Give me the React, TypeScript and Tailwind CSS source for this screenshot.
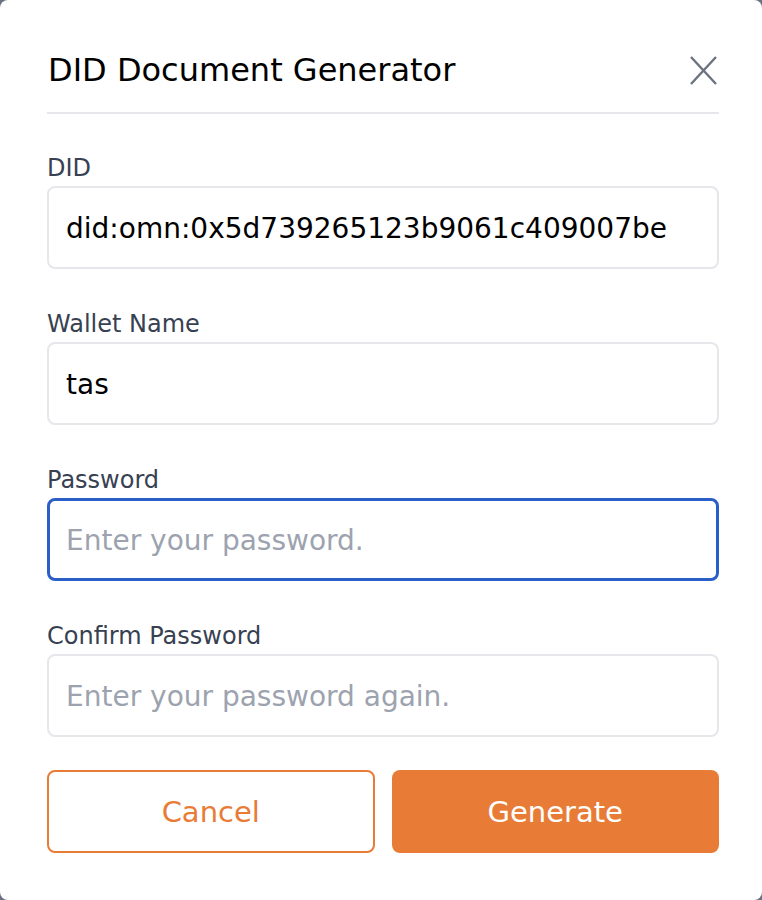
import React from 'react';

const font = { fontFamily: '"DejaVu Sans", "Noto Sans", sans-serif' };

interface IFieldProps {
  label: string;
  value?: string;
  placeholder?: string;
  type?: string;
  focused?: boolean;
}

const Field: React.FC<IFieldProps> = ({ label, value, placeholder, type = 'text', focused }) => {
  return (
    <div className="flex flex-col gap-1">
      <label className="h-[32px] pt-[2px] text-[24px] leading-[32px] text-[#374151]">{label}</label>
      {/* Input */}
      <input
        type={type}
        readOnly
        defaultValue={value}
        placeholder={placeholder}
        className={
          focused
            ? 'h-[83px] w-full rounded-lg border-[3px] border-[#2b5fc8] bg-white px-[16px] pt-[2px] text-[28px] text-black placeholder:text-[#9ca3af] outline-none'
            : 'h-[83px] w-full rounded-lg border-2 border-[#e5e7eb] bg-white px-[17px] pt-[2px] text-[28px] text-black placeholder:text-[#9ca3af] outline-none'
        }
        style={font}
      />
    </div>
  );
};

export default function App() {
  return (
    <div className="h-[900px] w-[762px] bg-gray-500" style={font}>
      <section className="flex h-full w-full flex-col rounded-[8px] bg-white pl-[47px] pr-[43px]">
        {/* Header */}
        <header className="flex items-center justify-between pt-[50px] pb-[22px]">
          <h2 className="pl-px text-[32px] leading-[40px] text-black">DID Document Generator</h2>
          <button className="mr-[2px] flex h-[40px] w-[27px] items-center justify-center text-[#6b7280]">
            <svg width="27" height="29" viewBox="0 0 27 29" fill="none" stroke="currentColor" strokeWidth="2.4">
              <path d="M1 1L26 28M26 1L1 28" />
            </svg>
          </button>
        </header>
        <div className="h-[2px] w-full bg-[#e5e7eb]" />

        {/* Body */}
        <div className="mt-9 flex flex-col gap-[37px]">
          <Field label="DID" value="did:omn:0x5d739265123b9061c409007be" />
          <Field label="Wallet Name" value="tas" />
          <Field label="Password" type="password" placeholder="Enter your password." focused />
          <Field label="Confirm Password" type="password" placeholder="Enter your password again." />
        </div>

        {/* Footer */}
        <div className="mt-[33px] grid grid-cols-2 gap-[17px]">
          <button className="h-[83px] rounded-lg border-2 border-[#e87c37] bg-white pt-[3px] text-[29px] text-[#e87c37]">
            Cancel
          </button>
          <button className="h-[83px] rounded-lg bg-[#e87c37] pt-[3px] text-[29px] text-white">Generate</button>
        </div>
      </section>
    </div>
  );
}
